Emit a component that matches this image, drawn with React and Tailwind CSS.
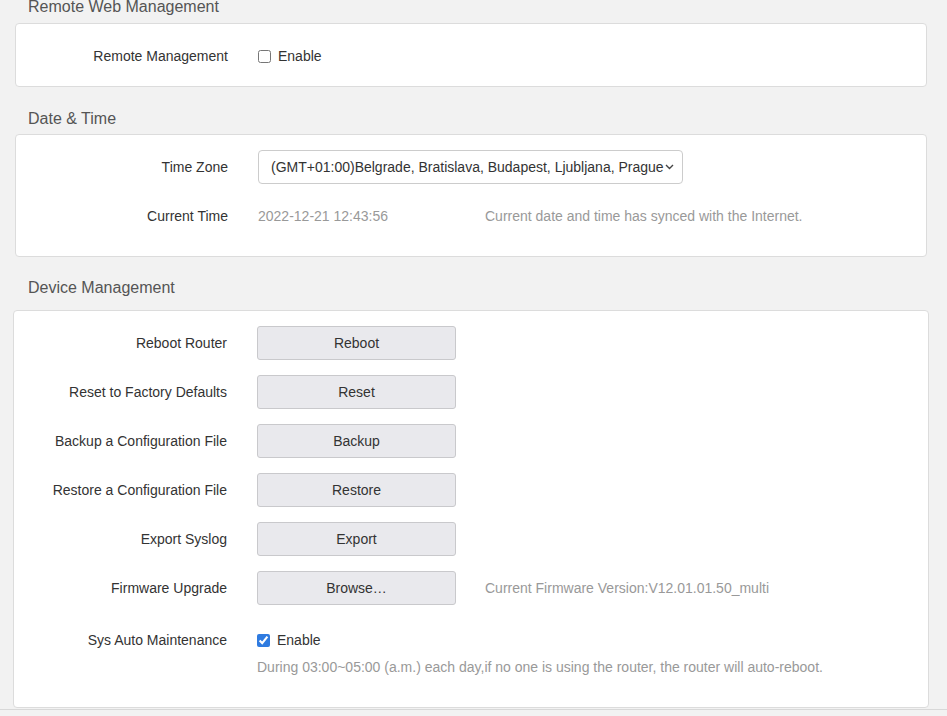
import React from "react";

function Label({ children, w = "w-[212px]" }) {
  return (
    <div className={`${w} shrink-0 text-right text-[#333] leading-[20px]`}>{children}</div>
  );
}

function Btn({ children }) {
  return (
    <button
      type="button"
      className="w-[199px] h-[34px] shrink-0 bg-[#e9e9ed] border border-[#c9c9cc] rounded-[3px] text-[14px] text-[#333] leading-[20px]"
      style={{ fontFamily: "inherit" }}
    >
      {children}
    </button>
  );
}

function BtnRow({ label, btn, hint }) {
  return (
    <div className="flex items-center h-[34px]">
      <Label w="w-[213px]">{label}</Label>
      <div className="ml-[30px] flex items-center">
        <Btn>{btn}</Btn>
        {hint && <span className="ml-[29px] text-[#999] leading-[20px]">{hint}</span>}
      </div>
    </div>
  );
}

export default function App() {
  return (
    <div
      className="min-h-[716px] bg-[#f2f2f2] text-[14px] text-[#333] overflow-hidden"
      style={{ fontFamily: '"Liberation Sans", Arial, sans-serif' }}
    >
      <div className="h-[23px] pl-[28px] text-[16px] leading-[14px] text-[#555]">
        Remote Web Management
      </div>

      <div className="ml-[15px] w-[912px] bg-white border border-[#dcdcdc] rounded-[4px] pt-[22px] pb-[20px]">
        <div className="flex items-center h-[20px]">
          <Label>Remote Management</Label>
          <label className="ml-[30px] flex items-center">
            <input type="checkbox" className="m-0 w-[13px] h-[13px]" />
            <span className="ml-[7px] leading-[20px]">Enable</span>
          </label>
        </div>
      </div>

      <div className="pt-[23px] pb-[6px] pl-[28px] text-[16px] leading-[18px] text-[#555]">
        Date &amp; Time
      </div>

      <div className="ml-[15px] w-[912px] bg-white border border-[#dcdcdc] rounded-[4px] pt-[15px] pb-[30px]">
        <div className="flex items-center h-[34px]">
          <Label>Time Zone</Label>
          <div className="ml-[30px] w-[425px] h-[34px] border border-[#ccc] rounded-[4px] flex items-center pl-[12px] pr-[8px] justify-between">
            <span className="leading-[20px] text-[#333] whitespace-nowrap">
              (GMT+01:00)Belgrade, Bratislava, Budapest, Ljubljana, Prague
            </span>
            <svg width="9" height="6" viewBox="0 0 9 6" className="shrink-0">
              <path d="M1 1l3.5 3.5L8 1" fill="none" stroke="#444" strokeWidth="1.4" />
            </svg>
          </div>
        </div>
        <div className="flex items-center h-[20px] mt-[22px]">
          <Label>Current Time</Label>
          <div className="ml-[30px] w-[227px] text-[#999] leading-[20px]">2022-12-21 12:43:56</div>
          <div className="text-[#999] leading-[20px]">Current date and time has synced with the Internet.</div>
        </div>
      </div>

      <div className="pt-[22px] pb-[13px] pl-[28px] text-[16px] leading-[18px] text-[#555]">
        Device Management
      </div>

      <div className="ml-[13px] w-[916px] bg-white border border-[#dcdcdc] rounded-[4px] pt-[15px] pb-[30px]">
        <div className="flex flex-col gap-[15px]">
          <BtnRow label="Reboot Router" btn="Reboot" />
          <BtnRow label="Reset to Factory Defaults" btn="Reset" />
          <BtnRow label="Backup a Configuration File" btn="Backup" />
          <BtnRow label="Restore a Configuration File" btn="Restore" />
          <BtnRow label="Export Syslog" btn="Export" />
          <BtnRow
            label="Firmware Upgrade"
            btn="Browse…"
            hint="Current Firmware Version:V12.01.01.50_multi"
          />
        </div>
        <div className="flex items-center h-[20px] mt-[25px]">
          <Label w="w-[213px]">Sys Auto Maintenance</Label>
          <label className="ml-[30px] flex items-center">
            <input type="checkbox" defaultChecked className="m-0 w-[13px] h-[13px] accent-[#2f7be0]" />
            <span className="ml-[7px] leading-[20px]">Enable</span>
          </label>
        </div>
        <div className="flex h-[20px] mt-[7px]">
          <div className="w-[213px] shrink-0" />
          <div className="ml-[30px] text-[#999] leading-[20px] whitespace-nowrap">
            During 03:00~05:00 (a.m.) each day,if no one is using the router, the router will auto-reboot.
          </div>
        </div>
      </div>

      <div className="mt-[1px] border-t border-[#d8d8d8] h-[10px] bg-[#f2f2f2]" />
    </div>
  );
}
